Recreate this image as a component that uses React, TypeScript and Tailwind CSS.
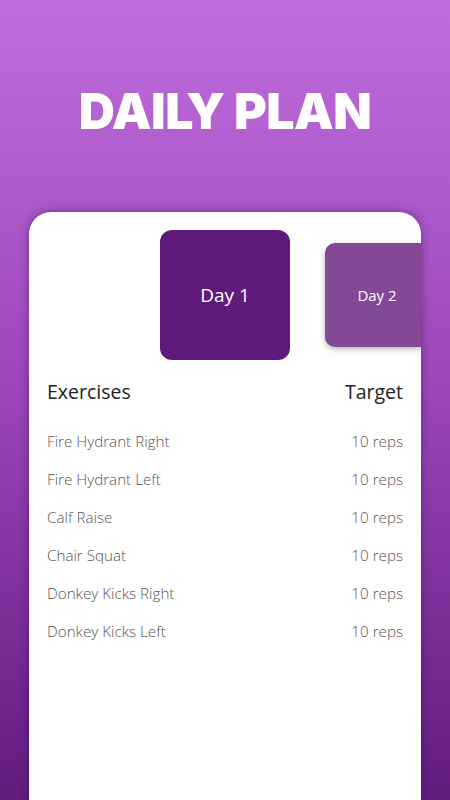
const EXERCISES = [
  "Fire Hydrant Right",
  "Fire Hydrant Left",
  "Calf Raise",
  "Chair Squat",
  "Donkey Kicks Right",
  "Donkey Kicks Left",
];

export default function App() {
  return (
    <div className="h-[800px] w-full overflow-hidden bg-gradient-to-b from-[#bf6ddc] via-[#9a45b8] to-[#621b7f] font-['Open_Sans',sans-serif]">
      {/* Title */}
      <div className="pt-[81px] text-center">
        <h1 className="font-['Inter',sans-serif] text-[50px] font-black leading-[60px] tracking-[-0.5px] text-white">
          DAILY PLAN
        </h1>
      </div>

      {/* Card */}
      <div className="mx-[29px] mt-[71px] h-[600px] overflow-hidden rounded-t-[22px] bg-white shadow-[0_0_8px_rgba(40,0,60,0.45)]">
        <div className="flex items-center gap-[35px] pl-[131px] pt-[18px]">
          <div className="flex h-[130px] w-[130px] shrink-0 items-center justify-center rounded-[12px] bg-[#5f1a7b]">
            <span className="text-[19px] text-white">Day 1</span>
          </div>
          <div className="flex h-[104px] w-[104px] shrink-0 items-center justify-center rounded-[10px] bg-[#834996] shadow-[0_2px_6px_rgba(0,0,0,0.3)]">
            <span className="text-[15px] text-white">Day 2</span>
          </div>
        </div>

        <div className="px-[18px] pt-[18px]">
          <div className="flex items-center justify-between text-[19.5px] leading-[28px] text-[#222]">
            <span>Exercises</span>
            <span>Target</span>
          </div>
          <div className="mt-[16px]">
            {EXERCISES.map((name) => (
              <div
                key={name}
                className="flex h-[38px] items-center justify-between text-[15.2px] font-light text-[#555]"
              >
                <span>{name}</span>
                <span>10 reps</span>
              </div>
            ))}
          </div>
        </div>
      </div>
    </div>
  );
}
